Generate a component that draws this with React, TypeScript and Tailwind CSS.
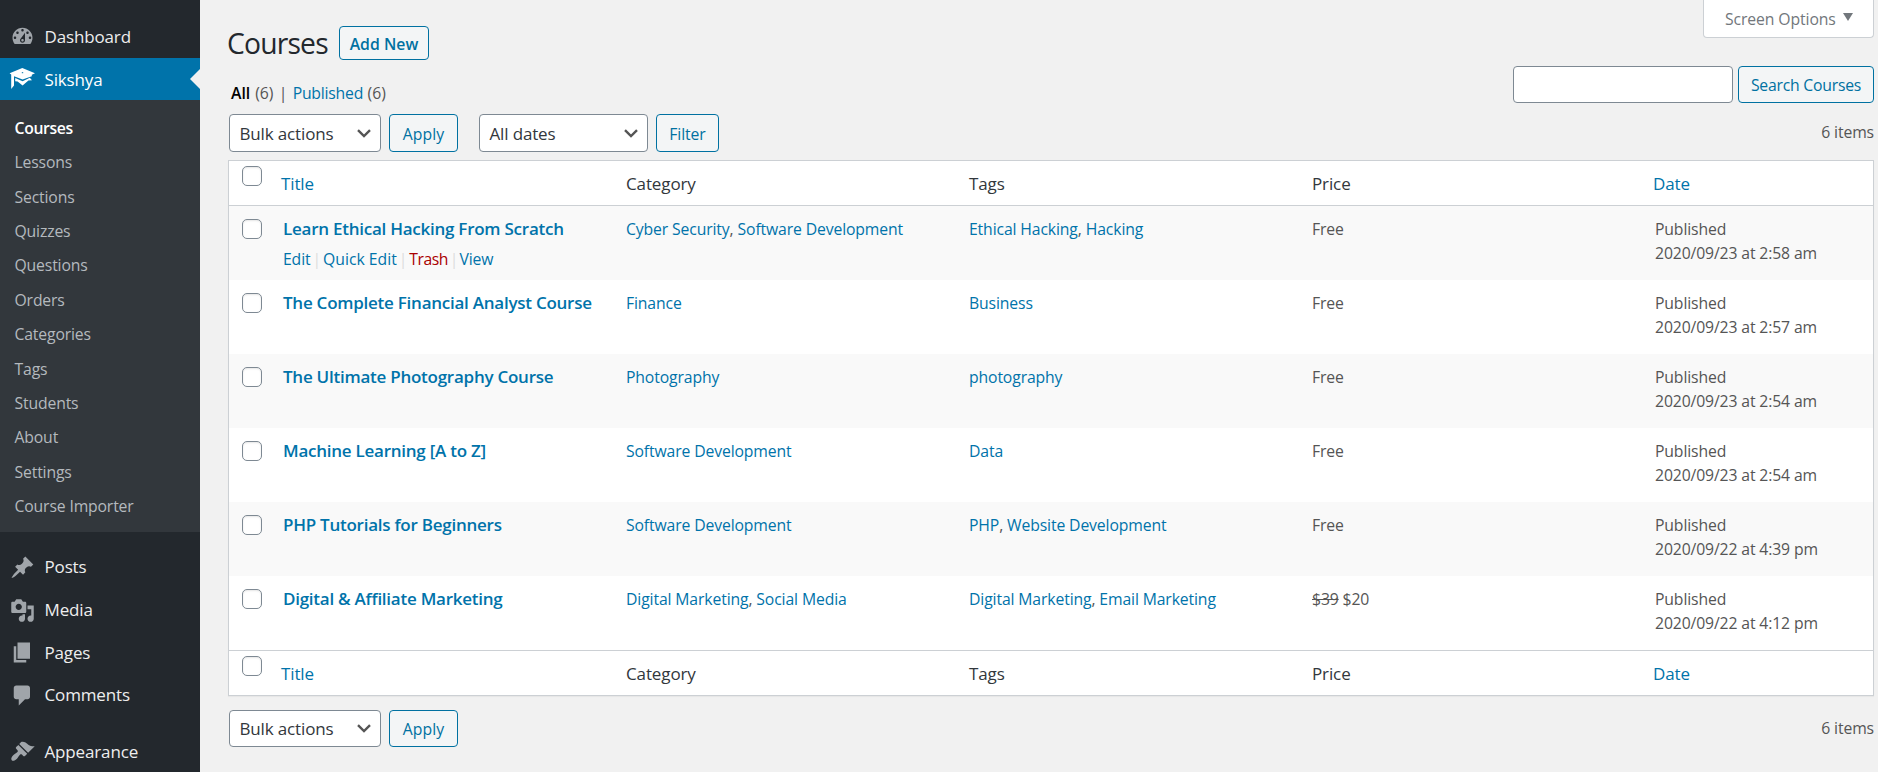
import type { ReactNode } from "react";

const ICONS: Record<string, string> = {
  Dashboard:
    "M3.76 16h12.48c1.1-1.37 1.76-3.11 1.76-5 0-4.42-3.58-8-8-8s-8 3.58-8 8c0 1.89.66 3.63 1.76 5zM10 4c.55 0 1 .45 1 1s-.45 1-1 1-1-.45-1-1 .45-1 1-1zM6 6c.55 0 1 .45 1 1s-.45 1-1 1-1-.45-1-1 .45-1 1-1zm8 0c.55 0 1 .45 1 1s-.45 1-1 1-1-.45-1-1 .45-1 1-1zm-5.37 5.55L12 7v6c0 1.1-.9 2-2 2s-2-.9-2-2c0-.57.24-1.08.63-1.45zM4 10c.55 0 1 .45 1 1s-.45 1-1 1-1-.45-1-1 .45-1 1-1zm12 0c.55 0 1 .45 1 1s-.45 1-1 1-1-.45-1-1 .45-1 1-1zm-5 3c0-.55-.45-1-1-1s-1 .45-1 1 .45 1 1 1 1-.45 1-1z",
  Posts:
    "M10.44 3.02l1.82-1.82 6.36 6.35-1.83 1.82c-1.05-.68-2.48-.57-3.41.36l-.75.75c-.92.93-1.04 2.35-.35 3.41l-1.83 1.82-2.41-2.41-2.8 2.79c-.42.42-3.38 2.71-3.8 2.29s1.86-3.39 2.28-3.81l2.79-2.79L4.1 9.36l1.83-1.82c1.05.69 2.48.57 3.4-.36l.75-.75c.93-.92 1.05-2.35.36-3.41z",
  Media:
    "M13 11V4c0-.55-.45-1-1-1h-1.67L9 1H5L3.67 3H2c-.55 0-1 .45-1 1v7c0 .55.45 1 1 1h10c.55 0 1-.45 1-1zM7 4.5c1.38 0 2.5 1.12 2.5 2.5S8.38 9.5 7 9.5 4.5 8.38 4.5 7 5.62 4.5 7 4.5zM14 6h5v10.5c0 1.38-1.12 2.5-2.5 2.5S14 17.88 14 16.5s1.12-2.5 2.5-2.5c.17 0 .34.02.5.05V9h-3V6zm-4 8.05V13h2v3.5c0 1.38-1.12 2.5-2.5 2.5S7 17.88 7 16.5 8.12 14 9.5 14c.17 0 .34.02.5.05z",
  Pages: "M6 15V2h10v13H6zm-1 1h8v2H3V5h2v11z",
  Comments:
    "M5 2h9c1.1 0 2 .9 2 2v7c0 1.1-.9 2-2 2h-2l-5 5v-5H5c-1.1 0-2-.9-2-2V4c0-1.1.9-2 2-2z",
  Appearance:
    "M14.48 11.06L7.41 3.99l1.5-1.5c.5-.56 2.3-.47 3.51.32 1.21.8 1.43 1.28 2.91 2.1 1.18.64 2.45 1.26 4.45.85zm-.71.71L6.7 4.7 4.93 6.47c-.39.39-.39 1.02 0 1.41l1.06 1.06c.39.39.39 1.03 0 1.42-.6.6-1.43 1.11-2.21 1.69-.35.26-.7.53-1.01.84C1.43 14.23.4 16.08 1.4 17.07c.99 1 2.84-.03 4.18-1.36.31-.31.58-.66.85-1.02.57-.78 1.08-1.61 1.69-2.21.39-.39 1.02-.39 1.41 0l1.06 1.06c.39.39 1.02.39 1.41 0z",
};

function MenuItem({ label }: { label: string }) {
  return (
    <a className="flex h-[42.6px] items-center pl-[9.5px] text-[17px] tracking-[-0.15px] text-[#eee]">
      <svg viewBox="0 0 20 20" className="mr-[10px] h-[25px] w-[25px] shrink-0 fill-[#a0a5aa]">
        <path d={ICONS[label]} />
      </svg>
      <span>{label}</span>
    </a>
  );
}

const SUBMENU = ["Lessons", "Sections", "Quizzes", "Questions", "Orders", "Categories", "Tags", "Students", "About", "Settings", "Course Importer"];

function Sidebar() {
  return (
    <nav className="h-[772px] w-[200px] shrink-0 overflow-hidden bg-[#23282d] pt-[15.4px]">
      <MenuItem label="Dashboard" />
      <a className="flex h-[42px] items-center bg-[#0073aa] pl-[9px] text-[17px] tracking-[-0.15px] text-white">
        <svg viewBox="0 0 26 22" className="mr-[9.5px] h-[22px] w-[26px] shrink-0 fill-white">
          <path d="M13.3 0 26 5.2 22.8 6.7V8.2L13.6 11.4 5 8.2V17.6L2.2 21V6.4L.6 5.2z" />
          <path d="M6.2 9.9 13.6 13.2 20.8 9.8 23 12.2 19.4 12.4 13.6 17.4 8.6 13.4 6.2 13.2z" />
          <path d="M12.8 4.2h1.4v1h-1.4z" className="fill-[#0073aa]" />
        </svg>
        <span className="pt-[1.5px]">Sikshya</span>
        <span className="ml-auto h-0 w-0 border-y-[10px] border-r-[10px] border-y-transparent border-r-[#f1f1f1]" />
      </a>
      <div className="h-[432px] bg-[#32373c] pt-[10.6px] text-[15.75px] tracking-[-0.15px] text-[#b4b9be]">
        <a className="flex h-[34.4px] items-center pl-[14.5px] font-semibold tracking-[-0.35px] text-white">Courses</a>
        {SUBMENU.map((item) => (
          <a key={item} className="flex h-[34.4px] items-center pl-[14.5px]">{item}</a>
        ))}
      </div>
      <div className="pt-[14.2px]">
        <MenuItem label="Posts" />
        <MenuItem label="Media" />
        <MenuItem label="Pages" />
        <MenuItem label="Comments" />
        <div className="h-[14px]" />
        <MenuItem label="Appearance" />
      </div>
    </nav>
  );
}

function Button({ className, children }: { className: string; children: ReactNode }) {
  return (
    <button className={`flex shrink-0 items-center justify-center rounded-[4px] border border-[#0071a1] bg-[#f3f5f6] text-[15.75px] text-[#0071a1] ${className}`}>
      {children}
    </button>
  );
}

function Select({ className, children }: { className: string; children: ReactNode }) {
  return (
    <div className={`flex shrink-0 items-center justify-between rounded-[4px] border border-[#7e8993] bg-white pt-px pr-[9px] pl-[9.5px] text-[17px] tracking-[-0.15px] text-[#32373c] ${className}`}>
      <span>{children}</span>
      <svg viewBox="0 0 14 9" className="mb-px h-[9px] w-[14px] fill-none stroke-[#555] stroke-[2.4]">
        <path d="M1 1.2l6 5.8 6-5.8" />
      </svg>
    </div>
  );
}

function Checkbox() {
  return <span className="ml-[13px] block h-5 w-5 rounded-[5px] border border-[#7e8993] bg-white shadow-[inset_0_1px_2px_rgba(0,0,0,0.1)]" />;
}

const COLS = "grid grid-cols-[52px_345px_343px_343px_341px_1fr]";

function HeadRow({ className }: { className: string }) {
  return (
    <div className={`${COLS} h-[45px] border-[#ccd0d4] text-[17px] leading-[46px] tracking-[-0.12px] text-[#32373c] ${className}`}>
      <div className="pt-[5px]"><Checkbox /></div>
      <div className="text-[#0073aa]">Title</div>
      <div>Category</div>
      <div>Tags</div>
      <div>Price</div>
      <div className="text-[#0073aa]">Date</div>
    </div>
  );
}

interface Course {
  title: string;
  categories: string[];
  tags: string[];
  date: string;
  oldPrice?: string;
  price: string;
}

const COURSES: Course[] = [
  { title: "Learn Ethical Hacking From Scratch", categories: ["Cyber Security", "Software Development"], tags: ["Ethical Hacking", "Hacking"], price: "Free", date: "2020/09/23 at 2:58 am" },
  { title: "The Complete Financial Analyst Course", categories: ["Finance"], tags: ["Business"], price: "Free", date: "2020/09/23 at 2:57 am" },
  { title: "The Ultimate Photography Course", categories: ["Photography"], tags: ["photography"], price: "Free", date: "2020/09/23 at 2:54 am" },
  { title: "Machine Learning [A to Z]", categories: ["Software Development"], tags: ["Data"], price: "Free", date: "2020/09/23 at 2:54 am" },
  { title: "PHP Tutorials for Beginners", categories: ["Software Development"], tags: ["PHP", "Website Development"], price: "Free", date: "2020/09/22 at 4:39 pm" },
  { title: "Digital & Affiliate Marketing", categories: ["Digital Marketing", "Social Media"], tags: ["Digital Marketing", "Email Marketing"], oldPrice: "$39", price: "$20", date: "2020/09/22 at 4:12 pm" },
];

function Links({ items }: { items: string[] }) {
  return (
    <div>
      {items.map((item, i) => (
        <span key={item}>
          {i > 0 && ", "}
          <a className="text-[#0073aa]">{item}</a>
        </span>
      ))}
    </div>
  );
}

function RowActions() {
  return (
    <div className="mt-[6px] flex">
      <a>Edit</a>
      <span className="mx-[2px] text-[#ddd]">|</span>
      <a className="tracking-[0px]">Quick Edit</a>
      <span className="mx-[2px] text-[#ddd]">|</span>
      <a className="tracking-[-0.5px] text-[#a00]">Trash</a>
      <span className="mr-px ml-[2px] text-[#ddd]">|</span>
      <a>View</a>
    </div>
  );
}

export default function App() {
  return (
    <div className="flex h-[772px] w-[1878px] overflow-hidden bg-[#f1f1f1] font-['Open_Sans','Noto_Sans',sans-serif] text-[15.75px] leading-6 text-[#555]">
      <Sidebar />
      <main className="flex-1 pr-1 pl-7">
        <div className="flex h-[114px] justify-between">
          <div>
            <div className="flex h-[60px] items-center pt-[26px]">
              <h1 className="-ml-px w-[112px] text-[28.25px] leading-none tracking-[-0.8px] text-[#23282d]">Courses</h1>
              <Button className="h-[34px] w-[90px] pt-[2px] font-semibold tracking-[0.05px]">Add New</Button>
            </div>
            <div className="mt-[21px] flex pl-[3px] text-[#555]">
              <a className="mr-[5px] font-semibold text-black">All</a>
              <span>(6)</span>
              <span className="mx-[5.25px]">|</span>
              <a className="mr-[4.5px] tracking-[-0.22px] text-[#0073aa]">Published</a>
              <span>(6)</span>
            </div>
          </div>
          <div className="flex flex-col items-end">
            <button className="flex h-[38px] w-[171px] items-center justify-between rounded-b-[4px] border border-t-0 border-[#ccd0d4] bg-white pt-px pr-[20px] pl-[21px] tracking-[-0.1px] text-[#72777c]">
              <span>Screen Options</span>
              <span className="-mt-[4px] h-0 w-0 border-x-[5px] border-t-[8px] border-x-transparent border-t-[#72777c]" />
            </button>
            <div className="mt-[28px] flex gap-[5px]">
              <div className="h-[37px] w-[220px] rounded-[4px] border border-[#7e8993] bg-white" />
              <Button className="h-[37px] w-[136px] pt-px tracking-[-0.22px]">Search Courses</Button>
            </div>
          </div>
        </div>

        <div className="flex h-[38px] items-center pl-px">
          <Select className="h-[38px] w-[152px]">Bulk actions</Select>
          <Button className="ml-2 h-[38px] w-[69px] pt-px tracking-[0.1px]">Apply</Button>
          <Select className="ml-[21px] h-[38px] w-[169px]">All dates</Select>
          <Button className="ml-2 h-[38px] w-[63px] pt-px tracking-[-0.1px]">Filter</Button>
          <span className="ml-auto pb-[2px] tracking-[-0.12px]">6 items</span>
        </div>

        <div className="mt-2 border border-[#ccd0d4] bg-white shadow-[0_1px_1px_rgba(0,0,0,0.04)]">
          <HeadRow className="border-b" />
          {COURSES.map((course, i) => (
            <div key={course.title} className={`${COLS} h-[74px] pt-[11px] tracking-[-0.13px] ${i % 2 === 0 ? "bg-[#f9f9f9]" : ""}`}>
              <div className="pt-[2px]"><Checkbox /></div>
              <div className="pl-[2px] text-[#0073aa]">
                <a className="block text-[17px] font-semibold tracking-[-0.25px]">{course.title}</a>
                {i === 0 && <RowActions />}
              </div>
              <Links items={course.categories} />
              <Links items={course.tags} />
              <div>
                {course.oldPrice && <><del>{course.oldPrice}</del>{" "}</>}
                {course.price}
              </div>
              <div className="pl-[2px]">
                Published
                <br />
                {course.date}
              </div>
            </div>
          ))}
          <HeadRow className="border-t" />
        </div>

        <div className="mt-[14px] flex h-[37px] items-center pl-px">
          <Select className="h-[37px] w-[152px]">Bulk actions</Select>
          <Button className="ml-2 h-[37px] w-[69px] pt-px tracking-[0.1px]">Apply</Button>
          <span className="ml-auto pb-px tracking-[-0.12px]">6 items</span>
        </div>
      </main>
    </div>
  );
}
